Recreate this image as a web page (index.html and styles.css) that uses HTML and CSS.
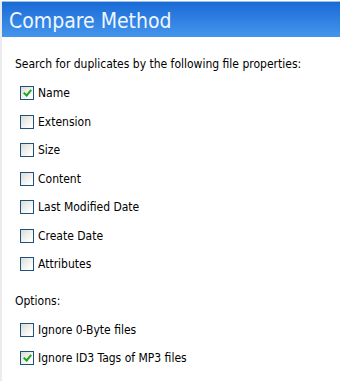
FILE: index.html
```html
<!DOCTYPE html>
<html>
<head>
    <title>Compare Method</title>
    <meta charset="UTF-8"/>
    <link rel="stylesheet" href="styles.css">
</head>
<body>
    <div class="panel">
        <div class="panel-header">Compare Method</div>
        <div class="panel-body">
            <div class="section-title">Search for duplicates by the following file properties:</div>
            <ul class="check-list">
                <li><span class="box checked"></span>Name</li>
                <li><span class="box"></span>Extension</li>
                <li><span class="box"></span>Size</li>
                <li><span class="box"></span>Content</li>
                <li><span class="box"></span>Last Modified Date</li>
                <li><span class="box"></span>Create Date</li>
                <li><span class="box"></span>Attributes</li>
            </ul>
            <div class="section-title options">Options:</div>
            <ul class="check-list">
                <li><span class="box"></span>Ignore 0-Byte files</li>
                <li><span class="box checked"></span>Ignore ID3 Tags of MP3 files</li>
            </ul>
        </div>
    </div>
</body>
</html>
```

FILE: styles.css
```css
body {
    margin: 0;
    font-family: "DejaVu Sans Condensed", "DejaVu Sans", sans-serif;
    background-color: #ffffff;
    color: #000000;
}
.panel {
    height: 381px;
    border-left: 2px solid #ececec;
    box-sizing: border-box;
}
.panel-header {
    margin-top: 1px;
    height: 35px;
    border-top: 1px solid #9cc0ee;
    background: linear-gradient(to bottom, #1a6ad6, #2f80e2 50%, #4496ec);
    color: #eef6ff;
    font-size: 21px;
    line-height: 38px;
    padding-left: 7px;
}
.panel-body {
    padding: 19px 0 0 13px;
    font-size: 12px;
}
.section-title {
    height: 16px;
    line-height: 16px;
}
.section-title.options {
    margin-top: 14px;
}
.check-list {
    list-style: none;
    margin: 7px 0 0 0;
    padding: 0 0 0 5px;
}
.check-list li {
    display: flex;
    align-items: center;
    height: 28.5px;
}
.box {
    width: 12px;
    height: 12px;
    margin-right: 4px;
    border: 1px solid #1c5180;
    background: linear-gradient(135deg, #dcdcd5, #ffffff 85%);
    position: relative;
}
.box.checked::after {
    content: "";
    position: absolute;
    left: 4px;
    top: 1px;
    width: 3px;
    height: 6px;
    border: solid #22a322;
    border-width: 0 2.5px 2.5px 0;
    transform: rotate(40deg);
}
```
